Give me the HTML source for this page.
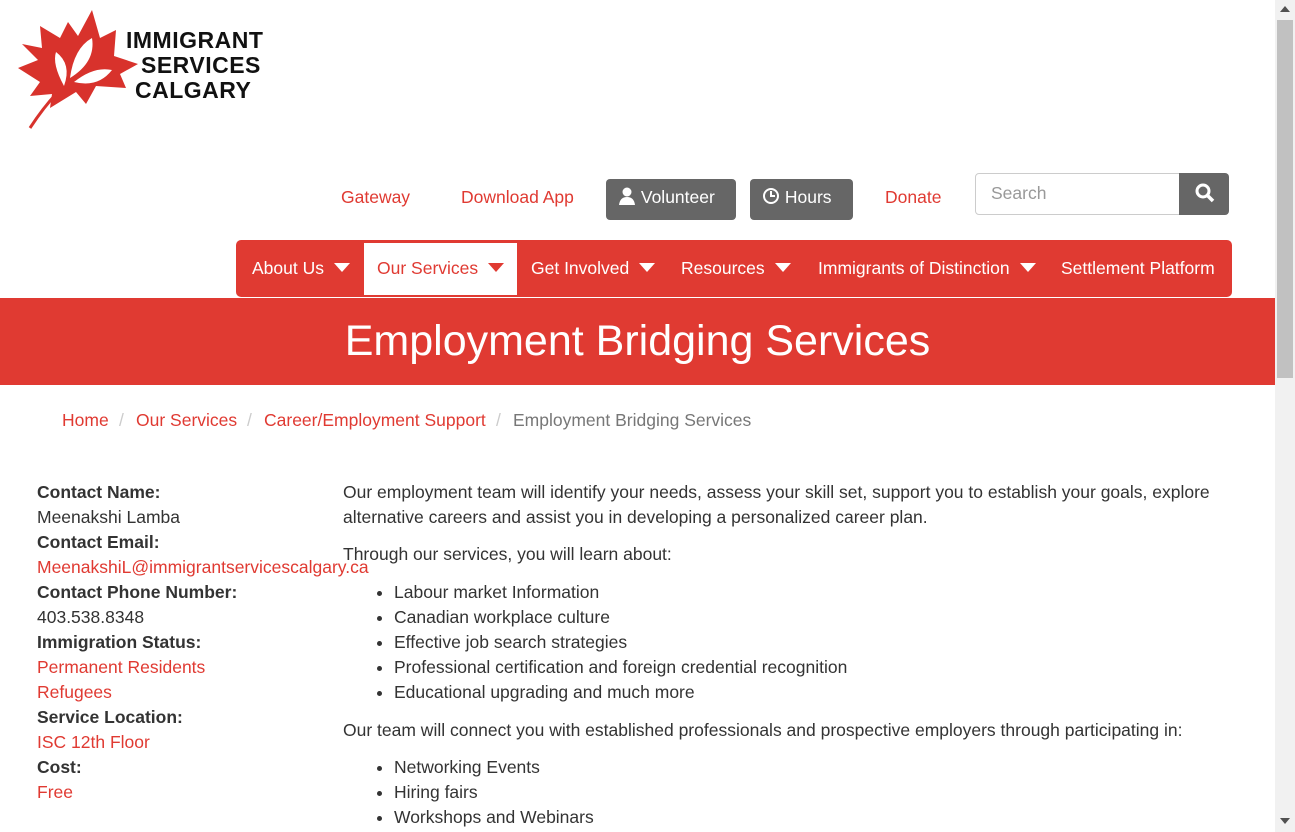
<!DOCTYPE html>
<html><head><meta charset="utf-8"><style>
*{margin:0;padding:0;box-sizing:border-box}
body{width:1295px;height:832px;overflow:hidden;background:#fff;font-family:"Liberation Sans",Arial,sans-serif;color:#333;position:relative}
.a{position:absolute}
.red{color:#e03a32}
.btn{position:absolute;top:179px;height:41px;background:#666;border-radius:4px;color:#fff;font-size:17.5px;line-height:36px;padding-left:12px}
.nav{position:absolute;left:236px;top:240px;width:996px;height:57px;background:#e03a32;border-radius:5px;color:#fff;font-size:17.5px}
.nav span{position:absolute;top:18px;white-space:nowrap}
.tri{display:inline-block;width:0;height:0;border-left:8px solid transparent;border-right:8px solid transparent;border-top:9px solid #fff;vertical-align:middle;margin-left:10px;margin-top:-3px}
.t{position:absolute;font-size:17.5px;line-height:25px;white-space:nowrap}
b{font-weight:bold}
ul{position:absolute;left:374px;font-size:17.5px;line-height:25px;list-style:disc;padding-left:20px}
</style></head><body>
<svg class="a" style="left:16px;top:8px" width="124" height="122" viewBox="0 0 124 122">
<polygon fill="#d8322c" points="76,2 84,30 100,22 98,48 122,56 104,66 110,80 80,78 70,96 60,84 34,100 36,86 14,88 24,74 2,60 22,52 6,36 26,40 24,18 44,30 52,14 62,28" />
<path d="M14,120 Q40,80 70,60" stroke="#d8322c" stroke-width="3" fill="none"/>
<path d="M48,78 Q36,56 40,44 Q56,56 48,78Z M54,70 Q58,40 76,30 Q80,54 54,70Z M58,74 Q78,58 96,62 Q82,80 58,74Z" fill="#fff"/>
</svg>
<div class="a" style="left:126px;top:28px;font-size:23px;font-weight:bold;color:#111;line-height:25px;letter-spacing:0.5px">IMMIGRANT<br><span style="margin-left:15px">SERVICES</span><br><span style="margin-left:9px">CALGARY</span></div>
<div class="t red" style="left:341px;top:185px">Gateway</div>
<div class="t red" style="left:461px;top:185px">Download App</div>
<div class="btn" style="left:606px;width:130px"><svg width="18" height="18" viewBox="0 0 18 18" style="vertical-align:-2px"><circle cx="9" cy="5" r="4.5" fill="#fff"/><path d="M1,18 Q2,10 9,10 Q16,10 17,18Z" fill="#fff"/></svg> Volunteer</div>
<div class="btn" style="left:750px;width:103px"><svg width="18" height="18" viewBox="0 0 18 18" style="vertical-align:-2px"><circle cx="9" cy="9" r="7" fill="none" stroke="#fff" stroke-width="2"/><path d="M9,4V9H13" stroke="#fff" stroke-width="2" fill="none"/></svg> Hours</div>
<div class="t red" style="left:885px;top:185px">Donate</div>
<div class="a" style="left:975px;top:173px;width:205px;height:42px;border:1px solid #ccc;border-radius:4px 0 0 4px;font-size:17.5px;color:#999;padding:9px 15px">Search</div>
<div class="a" style="left:1179px;top:173px;width:50px;height:42px;background:#666;border-radius:0 4px 4px 0"><svg width="20" height="20" viewBox="0 0 20 20" style="margin:10px 0 0 16px"><circle cx="8" cy="8" r="6" fill="none" stroke="#fff" stroke-width="3"/><path d="M12,12L18,18" stroke="#fff" stroke-width="3.5"/></svg></div>
<div class="nav">
<span style="left:16px">About Us<i class="tri"></i></span>
<div class="a" style="left:128px;top:3px;width:153px;height:52px;background:#fff"></div>
<span style="left:141px;color:#e03a32">Our Services<i class="tri" style="border-top-color:#e03a32"></i></span>
<span style="left:295px">Get Involved<i class="tri"></i></span>
<span style="left:445px">Resources<i class="tri"></i></span>
<span style="left:582px">Immigrants of Distinction<i class="tri"></i></span>
<span style="left:825px">Settlement Platform</span>
</div>
<div class="a" style="left:0;top:298px;width:1275px;height:87px;background:#e03a32;color:#fff;font-size:43px;text-align:center;line-height:86px">Employment Bridging Services</div>
<div class="t red" style="left:62px;top:408px">Home</div>
<div class="t" style="left:119px;top:408px;color:#ccc">/</div>
<div class="t red" style="left:136px;top:408px">Our Services</div>
<div class="t" style="left:247px;top:408px;color:#ccc">/</div>
<div class="t red" style="left:264px;top:408px">Career/Employment Support</div>
<div class="t" style="left:496px;top:408px;color:#ccc">/</div>
<div class="t" style="left:513px;top:408px;color:#777">Employment Bridging Services</div>
<div class="t" style="left:37px;top:480px">
<b>Contact Name:</b><br>Meenakshi Lamba<br><b>Contact Email:</b><br><span class="red">MeenakshiL@immigrantservicescalgary.ca</span><br><b>Contact Phone Number:</b><br>403.538.8348<br><b>Immigration Status:</b><br><span class="red">Permanent Residents</span><br><span class="red">Refugees</span><br><b>Service Location:</b><br><span class="red">ISC 12th Floor</span><br><b>Cost:</b><br><span class="red">Free</span>
</div>
<div class="t" style="left:343px;top:480px">Our employment team will identify your needs, assess your skill set, support you to establish your goals, explore<br>alternative careers and assist you in developing a personalized career plan.</div>
<div class="t" style="left:343px;top:542px">Through our services, you will learn about:</div>
<ul style="top:580px"><li>Labour market Information</li><li>Canadian workplace culture</li><li>Effective job search strategies</li><li>Professional certification and foreign credential recognition</li><li>Educational upgrading and much more</li></ul>
<div class="t" style="left:343px;top:718px">Our team will connect you with established professionals and prospective employers through participating in:</div>
<ul style="top:755px"><li>Networking Events</li><li>Hiring fairs</li><li>Workshops and Webinars</li></ul>
<div class="a" style="left:1275px;top:0;width:20px;height:832px;background:#f1f1f1"></div>
<div class="a" style="left:1277px;top:20px;width:16px;height:358px;background:#c1c1c1"></div>
<div class="a" style="left:1280px;top:6px;width:0;height:0;border-left:5px solid transparent;border-right:5px solid transparent;border-bottom:6px solid #505050"></div>
<div class="a" style="left:1280px;top:818px;width:0;height:0;border-left:5px solid transparent;border-right:5px solid transparent;border-top:6px solid #505050"></div>
</body></html>
